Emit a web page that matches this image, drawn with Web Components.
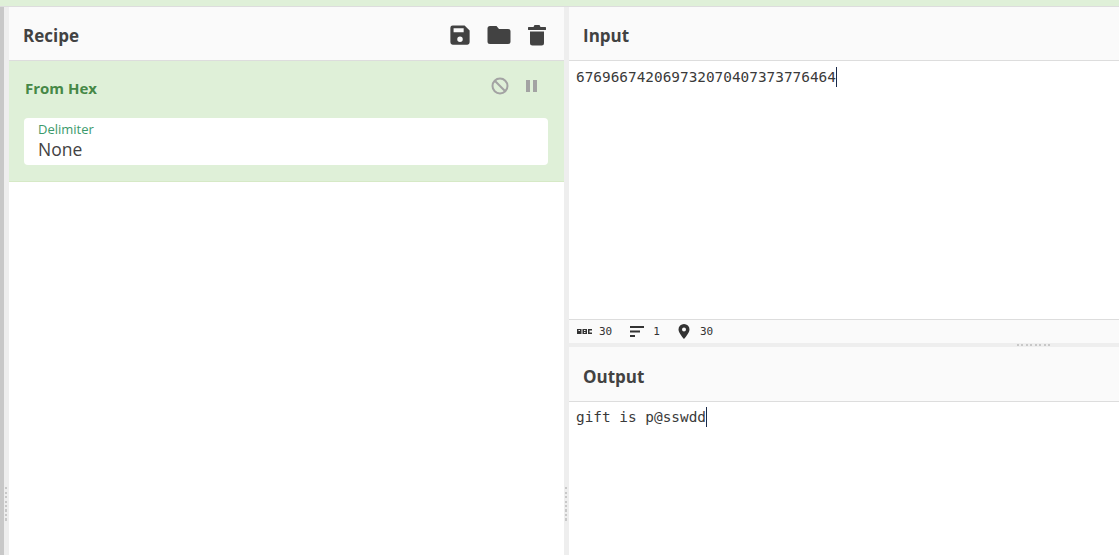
<!DOCTYPE html>
<html>
<head>
<meta charset="utf-8">
<style>
  html, body { margin: 0; height: 100%; overflow: hidden; background: #fff; }
  body { font-family: "Open Sans", sans-serif; color: #3a3a3a; }
  chef-app { height: 555px; }
</style>
</head>
<body>
<chef-app>
  <chef-recipe slot="recipe">
    <chef-operation name="From Hex" label="Delimiter" value="None"></chef-operation>
  </chef-recipe>
  <chef-io slot="input" heading="Input" text="676966742069732070407373776464" stats></chef-io>
  <chef-io slot="output" heading="Output" text="gift is p@sswdd" tall></chef-io>
</chef-app>

<script>
// panel heading used by recipe, input and output
class ChefHeader extends HTMLElement {
  constructor() {
    super();
    this.attachShadow({ mode: 'open' });
    this.shadowRoot.innerHTML = `
      <style>
        :host {
          display: flex;
          box-sizing: border-box;
          align-items: center;
          justify-content: space-between;
          height: 54px;
          padding: 4px 14px 0;
          background: #fafafa;
          border-bottom: 1px solid #dddddd;
          font-size: 17px;
          font-weight: 700;
          color: #424242;
        }
        :host([tall]) { height: 55px; }
      </style>
      <span><slot></slot></span>
      <div><slot name="icons"></slot></div>
    `;
  }
}
customElements.define('chef-header', ChefHeader);

class ChefRecipe extends HTMLElement {
  constructor() {
    super();
    this.attachShadow({ mode: 'open' });
    this.shadowRoot.innerHTML = `
      <style>
        :host { display: block; height: 100%; background: #fff; }
        .icons { display: flex; margin: -2px 4px 0 0; }
        svg { display: block; fill: #424242; }
      </style>
      <chef-header>Recipe
        <div class="icons" slot="icons">
          <svg width="22" height="22" viewBox="0 0 24 24" style="margin-right:16px"><path d="M17 1.500H4A2.500 2.500 0 0 0 1.500 4v16A2.500 2.500 0 0 0 4 22.500h16a2.500 2.500 0 0 0 2.500-2.500V7zM12 19.500a3 3 0 1 1 0-6 3 3 0 0 1 0 6zM16 9H5V4.500h11z"/></svg>
          <svg width="24" height="22" viewBox="0 0 24 22" style="margin-right:17px"><path d="M3 2h6.500l2.500 3h9a2.500 2.500 0 0 1 2.500 2.500v10A2.500 2.500 0 0 1 21 20H3a2.500 2.500 0 0 1-2.500-2.500v-13A2.500 2.500 0 0 1 3 2z"/></svg>
          <svg width="18" height="22" viewBox="0 0 18 22"><path d="M6.500 1h5l1 2H17a1 1 0 0 1 0 3H1a1 1 0 0 1 0-3h4.500zM2 7.500h14V19a2.500 2.500 0 0 1-2.500 2.500h-9A2.500 2.500 0 0 1 2 19z"/></svg>
        </div>
      </chef-header>
      <slot></slot>
    `;
  }
}
customElements.define('chef-recipe', ChefRecipe);

class ChefOperation extends HTMLElement {
  constructor() {
    super();
    this.attachShadow({ mode: 'open' });
    this.shadowRoot.innerHTML = `
      <style>
        :host {
          display: block;
          box-sizing: border-box;
          height: 121px;
          background: #dff0d8;
          border-bottom: 1px solid #d6e9c6;
          padding: 0 16px 0 15px;
        }
        .top { display: flex; justify-content: space-between; height: 57px; }
        .name { margin: 17px 0 0 1px; font-size: 15px; line-height: 20px; font-weight: 700; color: #468847; }
        .ctrl { display: flex; gap: 14px; margin-top: 15px; margin-right: 9px; height: 20px; }
        svg { display: block; }
        .field {
          box-sizing: border-box;
          height: 47px;
          background: #fff;
          border-radius: 4px;
          padding: 3px 14px 0;
        }
        label { display: block; font-size: 13px; line-height: 16px; color: #3c9a6c; }
        .value { font-size: 17.500px; line-height: 25px; color: #424242; }
      </style>
      <div class="top">
        <span class="name"></span>
        <div class="ctrl">
          <svg width="20" height="20" viewBox="0 0 20 20" fill="none" stroke="#a3a3a3" stroke-width="2"><circle cx="10" cy="10" r="7.500"/><path d="M4.800 4.800l10.400 10.400"/></svg>
          <svg width="15" height="20" viewBox="0 0 15 20" fill="#a3a3a3"><path d="M2 4h4v12H2zM9 4h4v12H9z"/></svg>
        </div>
      </div>
      <div class="field"><label></label><div class="value"></div></div>
    `;
    this.shadowRoot.querySelector('.name').textContent = this.getAttribute('name');
    this.shadowRoot.querySelector('label').textContent = this.getAttribute('label');
    this.shadowRoot.querySelector('.value').textContent = this.getAttribute('value');
  }
}
customElements.define('chef-operation', ChefOperation);

class ChefIo extends HTMLElement {
  constructor() {
    super();
    this.attachShadow({ mode: 'open' });
    this.shadowRoot.innerHTML = `
      <style>
        :host { display: flex; flex-direction: column; min-height: 0; background: #fff; }
        .text {
          flex: 1;
          padding: 6px 7px;
          font-family: "DejaVu Sans Mono", monospace;
          font-size: 14.400px;
          line-height: 20px;
          color: #3a3a3a;
          white-space: pre;
        }
        :host([tall]) .text { padding-top: 5px; }
        .caret { display: inline-block; width: 1px; height: 20px; background: #1a2a4a; vertical-align: top; }
        .stats {
          display: flex;
          box-sizing: border-box;
          align-items: center;
          height: 24px;
          padding: 0 8px;
          background: #fafafa;
          border-top: 1px solid #dddddd;
          font-family: "DejaVu Sans Mono", monospace;
          font-size: 11px;
          color: #333;
        }
        .stats svg { display: block; fill: #333; }
      </style>
      <chef-header></chef-header>
      <div class="text"><span class="val"></span><span class="caret"></span></div>
    `;
    const header = this.shadowRoot.querySelector('chef-header');
    header.textContent = this.getAttribute('heading');
    if (this.hasAttribute('tall')) header.setAttribute('tall', '');
    this.shadowRoot.querySelector('.val').textContent = this.getAttribute('text');
    if (this.hasAttribute('stats')) {
      const bar = document.createElement('div');
      bar.className = 'stats';
      bar.innerHTML = `
        <svg width="15" height="7" viewBox="0 0 15 7" style="margin-right:7px"><path fill-rule="evenodd" d="M0 1h4.500v5H0zM1.500 2v1h1.500V2zM5.500 1h4.500v5H5.500zM7 2v1h1.500V2zM7 4v1h1.500V4zM11 1h4v1.500h-2.500v2H15V6h-4z"/></svg>
        <span style="margin-right:18px">30</span>
        <svg width="15" height="12" viewBox="0 0 15 12" style="margin-right:8px"><path d="M0 0h14v2H0zM0 4.500h10v2H0zM0 9h5v2H0z"/></svg>
        <span style="margin-right:18px">1</span>
        <svg width="12" height="15" viewBox="0 0 12 15" style="margin-right:10px"><path fill-rule="evenodd" d="M6 0a5.500 5.500 0 0 1 5.500 5.500C11.500 9 6 15 6 15S.5 9 .5 5.500A5.500 5.500 0 0 1 6 0zm0 3.500a2 2 0 1 0 0 4 2 2 0 0 0 0-4z"/></svg>
        <span>30</span>`;
      this.shadowRoot.appendChild(bar);
    }
  }
}
customElements.define('chef-io', ChefIo);

class ChefApp extends HTMLElement {
  constructor() {
    super();
    this.attachShadow({ mode: 'open' });
    this.shadowRoot.innerHTML = `
      <style>
        :host { display: flex; flex-direction: column; background: #eeeeee; }
        .banner { height: 6px; flex: none; background: #dff0d8; border-bottom: 1px solid #dddddd; }
        .main { flex: 1; display: grid; grid-template-columns: 4px 5px 555px 5px 1fr; min-height: 0; }
        .edge { background: #c8c8c8; }
        .gutter, .hgutter { background: #eeeeee; position: relative; }
        .right { display: grid; grid-template-rows: 336px 4px 1fr; min-height: 0; }
        /* grip dots that sit over the splitters */
        .dots-v {
          position: absolute; top: 480px; left: 1px; width: 2px; height: 34px;
          background: repeating-linear-gradient(to bottom, #c8c8c8 0 2px, transparent 2px 4.500px);
        }
        .dots-h {
          position: absolute; left: 448px; top: 1px; width: 34px; height: 2px;
          background: repeating-linear-gradient(to right, #c8c8c8 0 2px, transparent 2px 4.500px);
        }
        ::slotted(*) { min-height: 0; }
      </style>
      <div class="banner"></div>
      <div class="main">
        <div class="edge"></div>
        <div class="gutter"><div class="dots-v"></div></div>
        <slot name="recipe"></slot>
        <div class="gutter"><div class="dots-v"></div></div>
        <div class="right">
          <slot name="input"></slot>
          <div class="hgutter"><div class="dots-h"></div></div>
          <slot name="output"></slot>
        </div>
      </div>
    `;
  }
}
customElements.define('chef-app', ChefApp);
</script>
</body>
</html>
